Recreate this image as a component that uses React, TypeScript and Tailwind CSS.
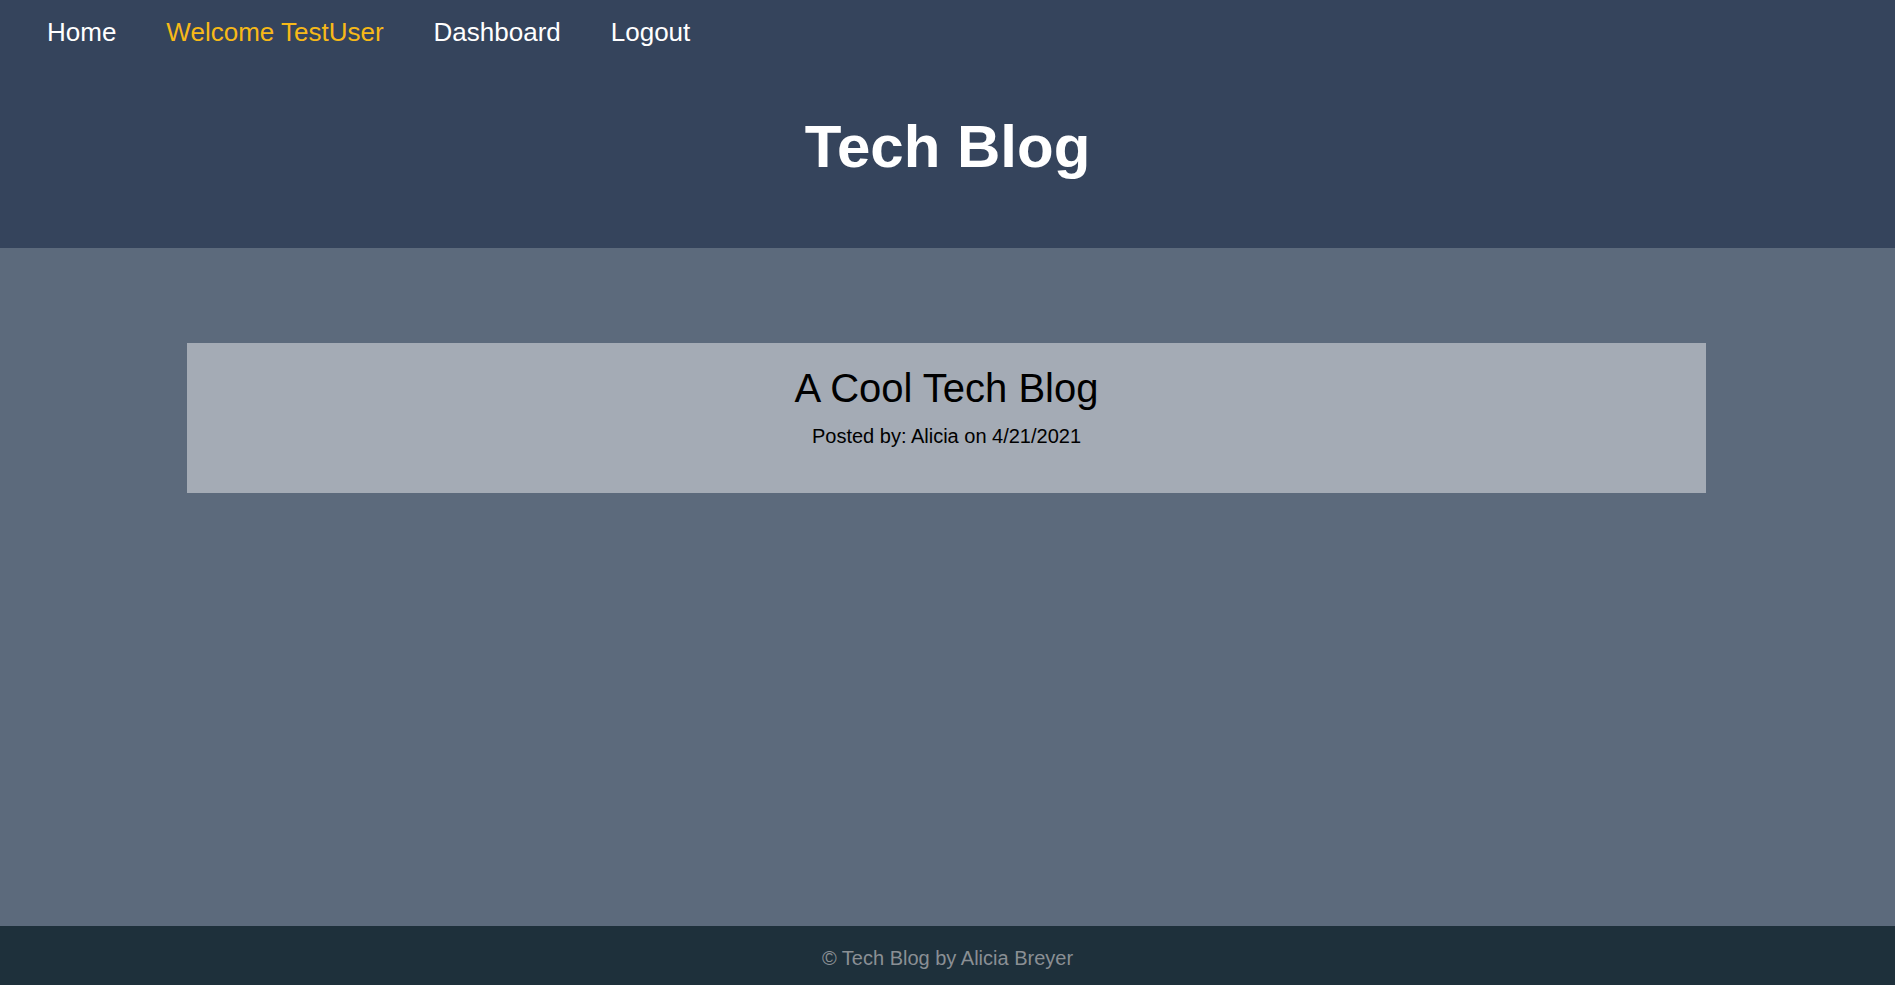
const navLinks = [
  { label: "Home", active: false },
  { label: "Welcome TestUser", active: true },
  { label: "Dashboard", active: false },
  { label: "Logout", active: false },
];

const posts = [{ title: "A Cool Tech Blog", author: "Alicia", date: "4/21/2021" }];

const App = () => {
  return (
    <div className="flex min-h-screen flex-col bg-[#5c6a7c] font-['Liberation_Sans',Arial,sans-serif]">
      <header className="h-[248px] shrink-0 bg-[#35445c]">
        <nav className="flex gap-[50px] pl-[47px] pt-[18px]">
          {navLinks.map((link) => (
            <a
              key={link.label}
              href="#"
              className={`text-[26px] leading-[29px] ${link.active ? "text-[#f7b918]" : "text-white"}`}
            >
              {link.label}
            </a>
          ))}
        </nav>
        <h1 className="mt-[65px] text-center text-[60px] font-bold leading-[69px] text-white">
          Tech Blog
        </h1>
      </header>

      <main className="flex-1 pt-[95px]">
        {posts.map((post) => (
          <div
            key={post.title}
            className="ml-[187px] h-[150px] w-[1519px] bg-[#a4abb5] pt-[22px] text-center text-black"
          >
            <h2 className="text-[40px] leading-[46px]">{post.title}</h2>
            <p className="mt-[14px] text-[20px] leading-[23px]">
              Posted by: {post.author} on {post.date}
            </p>
          </div>
        ))}
      </main>

      <footer className="flex h-[59px] shrink-0 items-center justify-center bg-[#1e303b] pt-[5px] text-[20px] text-[#8a8f94]">
        © Tech Blog by Alicia Breyer
      </footer>
    </div>
  );
};

export default App;
